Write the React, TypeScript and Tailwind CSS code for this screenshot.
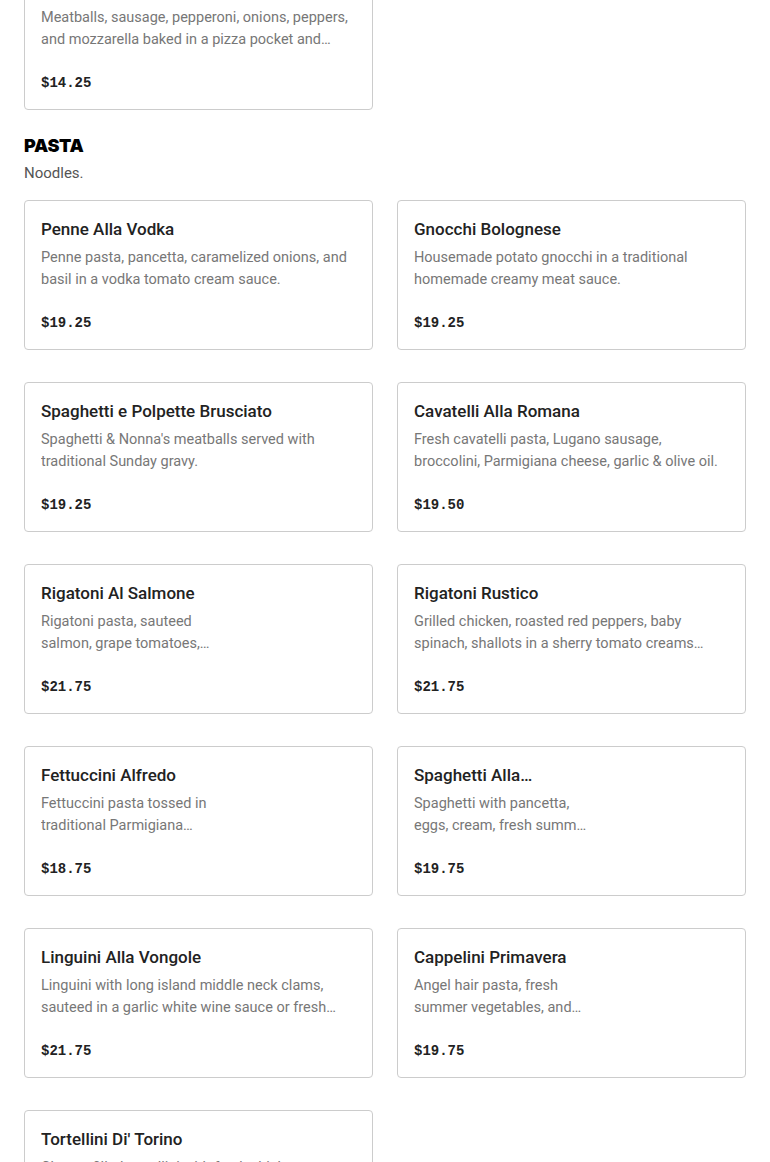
import React from "react";

type Item = { name: string; desc: string; price: string; img?: boolean };

const items: Item[] = [
  { name: "Penne Alla Vodka", desc: "Penne pasta, pancetta, caramelized onions, and basil in a vodka tomato cream sauce.", price: "$19.25" },
  { name: "Gnocchi Bolognese", desc: "Housemade potato gnocchi in a traditional homemade creamy meat sauce.", price: "$19.25" },
  { name: "Spaghetti e Polpette Brusciato", desc: "Spaghetti & Nonna's meatballs served with traditional Sunday gravy.", price: "$19.25" },
  { name: "Cavatelli Alla Romana", desc: "Fresh cavatelli pasta, Lugano sausage, broccolini, Parmigiana cheese, garlic & olive oil.", price: "$19.50" },
  { name: "Rigatoni Al Salmone", desc: "Rigatoni pasta, sauteed salmon, grape tomatoes, spinach in a pink vodka cream sauce.", price: "$21.75", img: true },
  { name: "Rigatoni Rustico", desc: "Grilled chicken, roasted red peppers, baby spinach, shallots in a sherry tomato creams sauce with rigatoni.", price: "$21.75" },
  { name: "Fettuccini Alfredo", desc: "Fettuccini pasta tossed in traditional Parmigiana cream sauce.", price: "$18.75", img: true },
  { name: "Spaghetti Alla Carbonara", desc: "Spaghetti with pancetta, eggs, cream, fresh summ…", price: "$19.75", img: true },
  { name: "Linguini Alla Vongole", desc: "Linguini with long island middle neck clams, sauteed in a garlic white wine sauce or fresh marinara.", price: "$21.75" },
  { name: "Cappelini Primavera", desc: "Angel hair pasta, fresh summer vegetables, and garlic olive oil.", price: "$19.75", img: true },
  { name: "Tortellini Di' Torino", desc: "Cheese filled tortellini with fresh chicken, peas and prosciutto in a cream sauce.", price: "$19.75" },
];

const sans = { fontFamily: "Roboto, 'Liberation Sans', sans-serif" };

function Card({ item }: { item: Item }) {
  return (
    <div className="h-[150px] rounded-[4px] border border-[#cccccc] bg-white p-[16px] flex gap-[12px]">
      <div className={item.img ? "w-[174px] shrink-0" : "flex-1 min-w-0"}>
        <div className="text-[17px] leading-[24px] font-medium text-[#222222] line-clamp-1">{item.name}</div>
        <div className="mt-[6px] text-[14.5px] leading-[22px] text-[#777777] line-clamp-2">{item.desc}</div>
        <div
          className="mt-[21px] text-[14px] leading-[22px] font-bold text-[#222222]"
          style={{ fontFamily: "'Liberation Mono', 'DejaVu Sans Mono', monospace" }}
        >
          {item.price}
        </div>
      </div>
    </div>
  );
}

export default function App() {
  return (
    <div className="bg-white min-h-[1162px] px-[24px] overflow-hidden" style={sans}>
      <div className="-mt-[40px] grid grid-cols-2 gap-x-[24px]">
        <Card
          item={{
            name: "Stromboli",
            desc: "Meatballs, sausage, pepperoni, onions, peppers, and mozzarella baked in a pizza pocket and served with marinara.",
            price: "$14.25",
          }}
        />
      </div>
      <h2
        className="mt-[24px] text-[18px] leading-[24px] font-black uppercase text-black tracking-[-0.3px]"
        style={{ fontFamily: "Inter, sans-serif" }}
      >
        Pasta
      </h2>
      <p className="mt-[4px] text-[15px] leading-[22px] text-[#555555]">Noodles.</p>
      <div className="mt-[16px] grid grid-cols-2 gap-x-[24px] gap-y-[32px]">
        {items.map((it) => (
          <Card key={it.name} item={it} />
        ))}
      </div>
    </div>
  );
}
